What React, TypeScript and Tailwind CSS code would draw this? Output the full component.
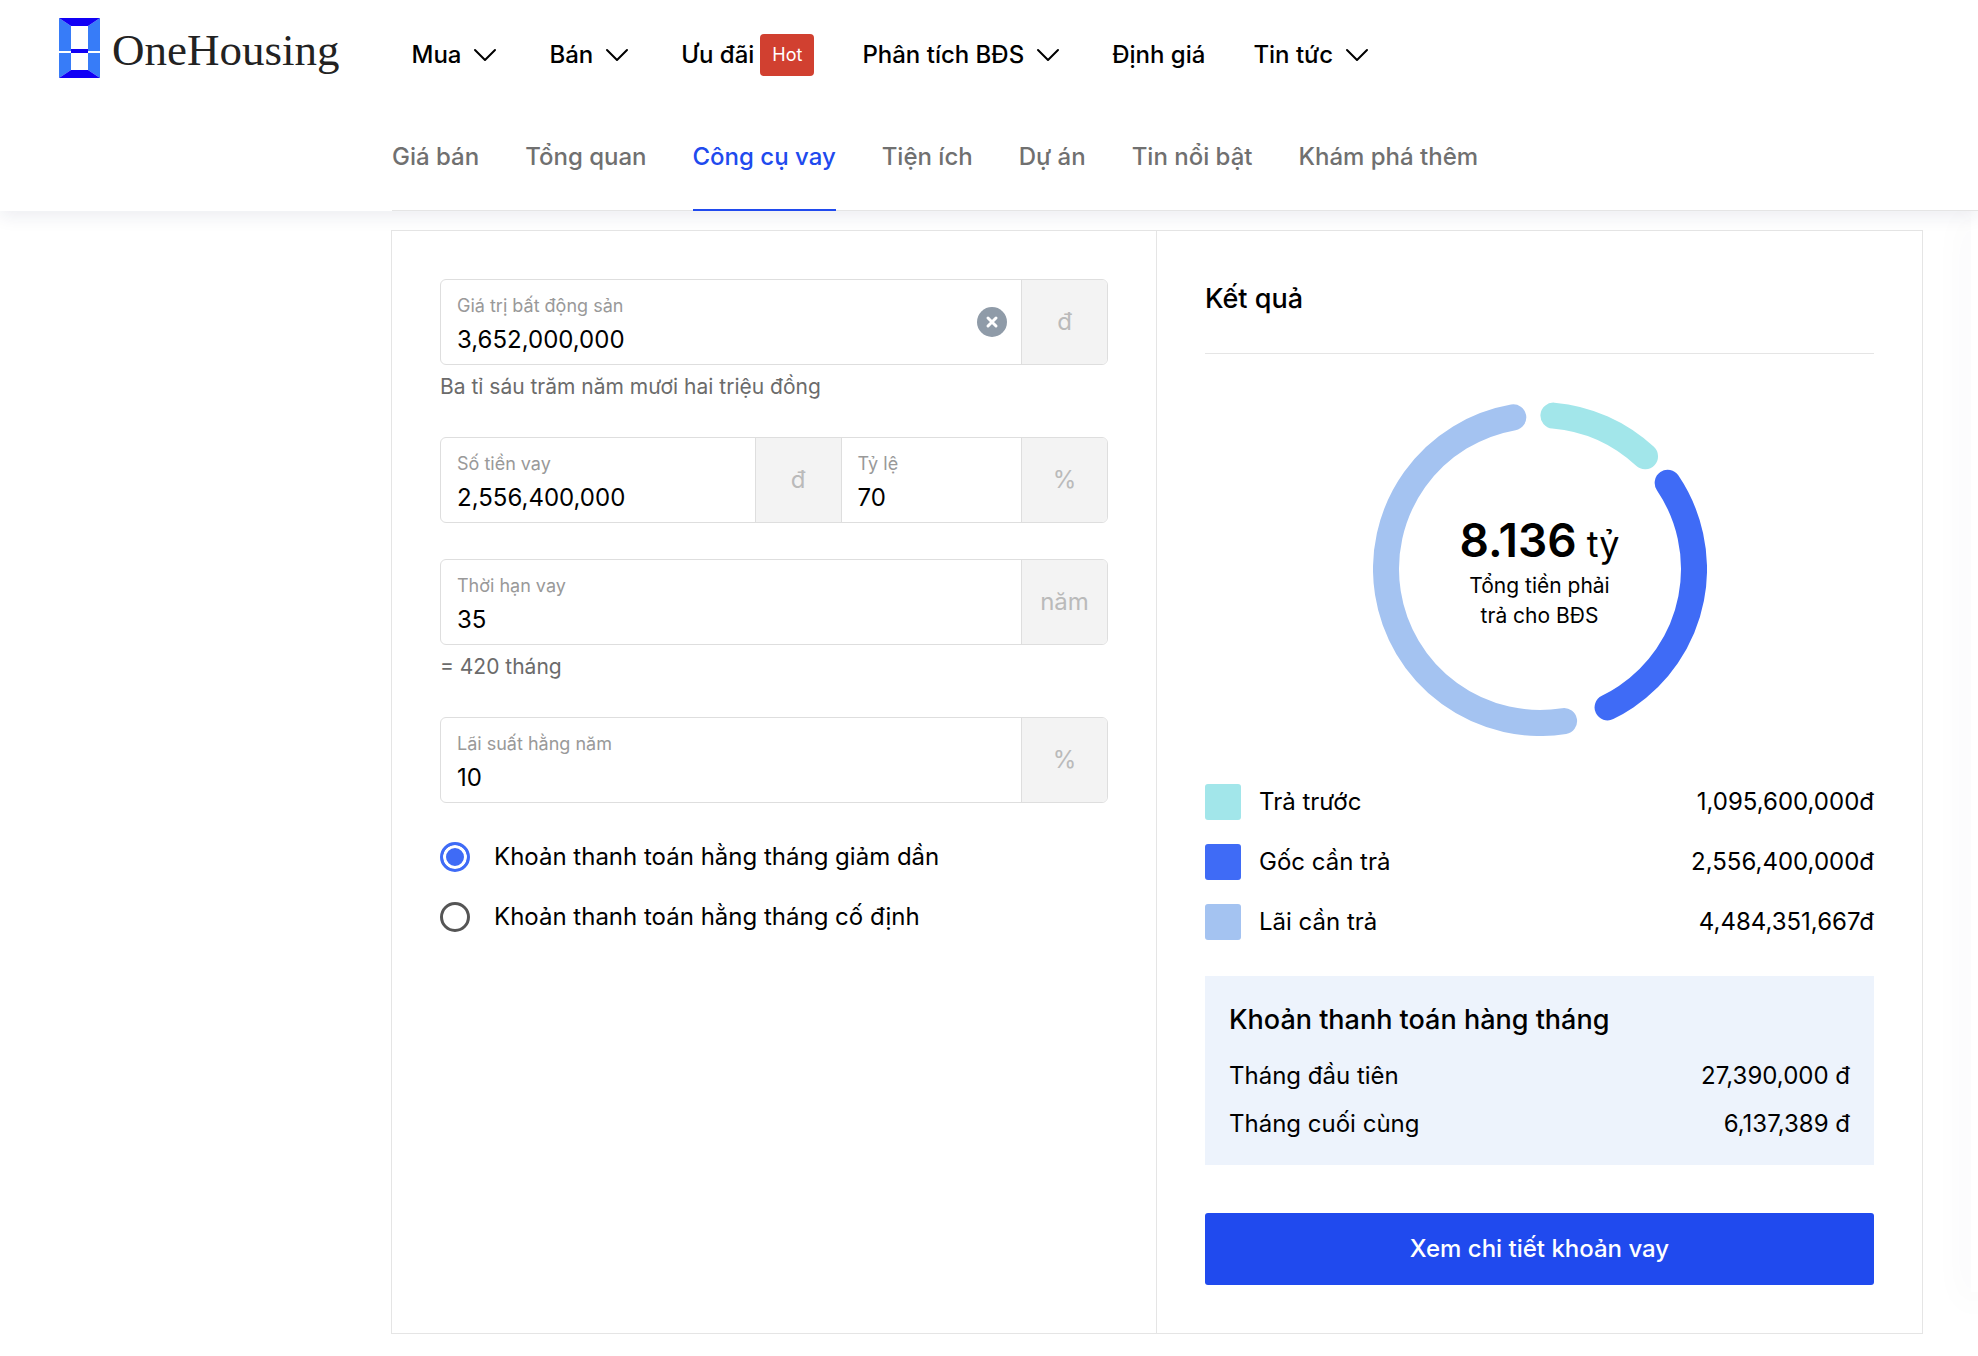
import { useState } from "react";

interface SubTab {
  label: string;
  href: string;
}

interface FieldProps {
  id: string;
  label: string;
  value: string;
  unit: string;
  onChange: (value: string) => void;
  onClear?: () => void;
  className?: string;
}

const subTabs: SubTab[] = [
  { label: "Giá bán", href: "#gia-ban" },
  { label: "Tổng quan", href: "#tong-quan" },
  { label: "Công cụ vay", href: "#cong-cu-vay" },
  { label: "Tiện ích", href: "#tien-ich" },
  { label: "Dự án", href: "#du-an" },
  { label: "Tin nổi bật", href: "#tin-noi-bat" },
  { label: "Khám phá thêm", href: "#kham-pha-them" },
];

// start and end are degrees, clockwise from the top
const slices = [
  { label: "Trả trước", value: "1,095,600,000đ", color: "#a2e6ea", swatch: "bg-[#a2e6ea]", start: 5, end: 43 },
  { label: "Gốc cần trả", value: "2,556,400,000đ", color: "#3f6bf6", swatch: "bg-[#3f6bf6]", start: 56, end: 154 },
  { label: "Lãi cần trả", value: "4,484,351,667đ", color: "#a4c3f1", swatch: "bg-[#a4c3f1]", start: 171, end: 350 },
];

const Chevron = () => (
  <svg viewBox="0 0 32 32" className="h-8 w-8" fill="none" stroke="currentColor" strokeWidth="2" strokeLinecap="round" strokeLinejoin="round">
    <path d="M6 11 L16 21 L26 11" />
  </svg>
);

const Logo = () => (
  <a href="#" className="flex items-center gap-3">
    <svg viewBox="0 0 41 60" className="h-[60px] w-[41px]">
      <path d="M0 0 L12 8 V33 H0 Z" fill="#377cf8" />
      <path d="M41 0 L29 8 V33 H41 Z" fill="#377cf8" />
      <path d="M0 34 H12 V52 L0 60 Z" fill="#377cf8" />
      <path d="M41 34 H29 V52 L41 60 Z" fill="#377cf8" />
      <path d="M0 0 H41 L29 8 H12 Z" fill="#1100f5" />
      <path d="M0 60 H41 L29 52 H12 Z" fill="#1100f5" />
      <path d="M12 31 H29 V35 H12 Z" fill="#1100f5" />
      <path d="M0 34 H12 M29 34 H41" stroke="#fff" strokeWidth="2" />
    </svg>
    <span className="pt-1 font-['Liberation_Serif',serif] text-[45px] leading-[56px] text-[#222]">
      OneHousing
    </span>
  </a>
);

const Field = ({ id, label, value, unit, onChange, onClear, className = "" }: FieldProps) => (
  <div className={`flex h-[84px] ${className}`}>
    <div className="flex min-w-0 grow items-center pr-3.5 pl-4">
      <div className="flex min-w-0 grow flex-col pt-1.5">
        <label htmlFor={id} className="text-lg leading-7 text-[#999]">
          {label}
        </label>
        <input
          id={id}
          className="h-[38px] w-full bg-transparent text-2xl outline-none"
          value={value}
          onChange={(e) => onChange(e.target.value)}
        />
      </div>
      {onClear && (
        <button type="button" aria-label="Xóa" onClick={onClear}>
          <svg viewBox="0 0 30 30" className="h-[30px] w-[30px]">
            <circle cx="15" cy="15" r="15" fill="#8f9ba8" />
            <path d="M11 11 L19 19 M19 11 L11 19" stroke="#fff" strokeWidth="3" strokeLinecap="round" />
          </svg>
        </button>
      )}
    </div>
    <span className="flex w-[86px] shrink-0 items-center justify-center border-l border-[#dedede] bg-[#f3f3f3] text-2xl text-[#bababa]">
      {unit}
    </span>
  </div>
);

const frame = "flex overflow-hidden rounded-md border border-[#dedede]";
const radio =
  "h-[30px] w-[30px] appearance-none rounded-full border-3 border-[#555] checked:border-[#3f6bf6] checked:bg-[#3f6bf6] checked:shadow-[inset_0_0_0_3px_#fff]";

const App = () => {
  const [price, setPrice] = useState("3,652,000,000");
  const [loan, setLoan] = useState("2,556,400,000");
  const [ratio, setRatio] = useState("70");
  const [years, setYears] = useState("35");
  const [rate, setRate] = useState("10");
  const [method, setMethod] = useState("decreasing");

  return (
    <div className="bg-white font-['Inter',sans-serif] text-black">
      <header className="relative z-10 bg-white shadow-[0_6px_16px_rgba(30,40,90,0.08)]">
        <div className="flex h-[108px] items-center gap-[72px] pb-3 pl-[59px]">
          <Logo />
          <nav className="flex items-center gap-12 pt-3.5 text-2xl font-medium whitespace-nowrap">
            <button className="flex items-center gap-2">Mua <Chevron /></button>
            <button className="flex items-center gap-2">Bán <Chevron /></button>
            <a href="#" className="flex items-center gap-1.5">
              Ưu đãi
              <span className="rounded-sm bg-[#d14030] px-3 text-lg leading-[42px] font-normal text-white">Hot</span>
            </a>
            <button className="flex items-center gap-2">Phân tích BĐS <Chevron /></button>
            <a href="#">Định giá</a>
            <button className="flex items-center gap-2">Tin tức <Chevron /></button>
          </nav>
        </div>
        <nav className="ml-[392px] flex h-[103px] gap-[46px] border-b border-[#e5e5e5] text-2xl font-medium whitespace-nowrap text-[#707070]">
          {subTabs.map((tab) => (
            <a
              key={tab.label}
              href={tab.href}
              className={
                tab.label === "Công cụ vay"
                  ? "-mb-px border-b-2 border-[#204aee] pt-[33px] text-[#204aee]"
                  : "pt-[33px]"
              }
            >
              {tab.label}
            </a>
          ))}
        </nav>
      </header>

      <div className="flex overflow-hidden pb-6">
        <main className="mt-[19px] ml-[391px] grid grow grid-cols-2 border border-[#e5e5e5]">
          <form className="border-r border-[#e5e5e5] p-12">
            <div className={frame}>
              <Field id="price" label="Giá trị bất động sản" value={price} unit="đ" onChange={setPrice} onClear={() => setPrice("")} className="grow" />
            </div>
            <p className="mt-1 text-[21px] leading-9 text-[#6b6b6b]">Ba tỉ sáu trăm năm mươi hai triệu đồng</p>

            <div className={`mt-8 ${frame}`}>
              <Field id="loan" label="Số tiền vay" value={loan} unit="đ" onChange={setLoan} className="w-3/5" />
              <Field id="ratio" label="Tỷ lệ" value={ratio} unit="%" onChange={setRatio} className="w-2/5 border-l border-[#dedede]" />
            </div>

            <div className={`mt-9 ${frame}`}>
              <Field id="years" label="Thời hạn vay" value={years} unit="năm" onChange={setYears} className="grow" />
            </div>
            <p className="mt-1 text-[21px] leading-9 text-[#6b6b6b]">= 420 tháng</p>

            <div className={`mt-8 ${frame}`}>
              <Field id="rate" label="Lãi suất hằng năm" value={rate} unit="%" onChange={setRate} className="grow" />
            </div>

            <div className="mt-9 flex flex-col gap-6 text-2xl">
              <label className="flex items-center gap-6 leading-9">
                <input
                  type="radio"
                  name="method"
                  className={radio}
                  checked={method === "decreasing"}
                  onChange={() => setMethod("decreasing")}
                />
                Khoản thanh toán hằng tháng giảm dần
              </label>
              <label className="flex items-center gap-6 leading-9">
                <input
                  type="radio"
                  name="method"
                  className={radio}
                  checked={method === "fixed"}
                  onChange={() => setMethod("fixed")}
                />
                Khoản thanh toán hằng tháng cố định
              </label>
            </div>
          </form>

          <section className="p-12">
            <h2 className="border-b border-[#e5e5e5] pb-[34px] text-[27px] leading-10 font-medium">Kết quả</h2>

            <div className="mt-12 grid place-items-center">
              <svg viewBox="0 0 334 334" className="col-start-1 row-start-1 h-[334px] w-[334px]" fill="none">
                {slices.map((s) => (
                  <circle
                    key={s.label}
                    cx="167"
                    cy="167"
                    r="154"
                    pathLength="360"
                    stroke={s.color}
                    strokeWidth="26"
                    strokeLinecap="round"
                    strokeDasharray={`${s.end - s.start} 360`}
                    transform={`rotate(${s.start - 90} 167 167)`}
                  />
                ))}
              </svg>
              <div className="col-start-1 row-start-1 pt-1.5 text-center">
                <p className="text-4xl leading-[54px]">
                  <strong className="text-[46px] leading-[54px] font-semibold">8.136</strong> tỷ
                </p>
                <p className="text-[21px] leading-[30px]">Tổng tiền phải<br />trả cho BĐS</p>
              </div>
            </div>

            <ul className="mt-12 flex flex-col gap-6 text-2xl leading-9">
              {slices.map((s) => (
                <li key={s.label} className="flex items-center">
                  <span className={`mr-[18px] h-9 w-9 rounded-[3px] ${s.swatch}`} />
                  {s.label}
                  <span className="ml-auto">{s.value}</span>
                </li>
              ))}
            </ul>

            <div className="mt-9 bg-[#edf3fc] px-6 pt-6 pb-[17px] text-2xl">
              <h3 className="text-[27px] leading-10 font-medium">Khoản thanh toán hàng tháng</h3>
              <dl className="mt-3">
                <div className="flex justify-between leading-[48px]">
                  <dt>Tháng đầu tiên</dt>
                  <dd>27,390,000 đ</dd>
                </div>
                <div className="flex justify-between leading-[48px]">
                  <dt>Tháng cuối cùng</dt>
                  <dd>6,137,389 đ</dd>
                </div>
              </dl>
            </div>

            <button className="mt-12 h-[72px] w-full rounded-[3px] bg-[#204aee] text-2xl font-medium text-white">
              Xem chi tiết khoản vay
            </button>
          </section>
        </main>

        {/* edge of the card that sits past the right side */}
        <aside className="mb-[42px] ml-12 w-[7px] shrink-0 bg-white shadow-[0_8px_36px_rgba(30,40,90,0.1)]" />
      </div>
    </div>
  );
};

export default App;
